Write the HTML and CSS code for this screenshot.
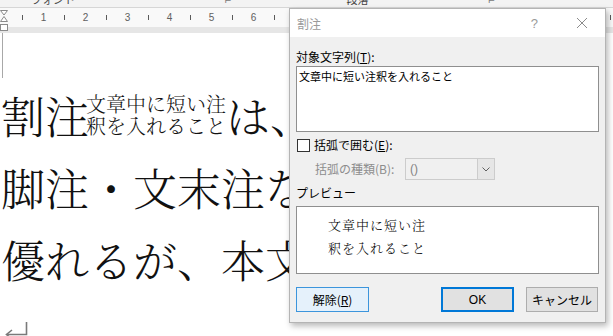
FILE: index.html
```html
<!DOCTYPE html>
<html lang="ja">
<head>
<meta charset="utf-8">
<link rel="stylesheet" href="styles.css">
</head>
<body>
<div class="page">
  <div class="ribbon">
    <span class="rb rb-font">フォント</span>
    <span class="rb rb-l1">⌐</span>
    <span class="rb rb-para">段落</span>
    <span class="rb rb-l2">⌐</span>
  </div>
  <div class="ruler">
    <span class="t"></span><span class="n">1</span><span class="t"></span><span class="n">2</span><span class="t"></span><span class="n">3</span><span class="t"></span><span class="n">4</span><span class="t"></span><span class="n">5</span><span class="t"></span><span class="n">6</span><span class="t"></span><span class="n">7</span><span class="t"></span><span class="n">8</span><span class="t"></span><span class="n">9</span><span class="t"></span><span class="n">10</span><span class="t"></span><span class="n">11</span><span class="t"></span><span class="n">12</span><span class="t"></span><span class="n">13</span><span class="t"></span><span class="n">14</span><span class="t"></span>
    <svg class="indent" width="9" height="23" viewBox="0 0 9 23">
      <path d="M0.5 0.5 H7.5 L4 5 Z" fill="#fff" stroke="#8a8a8a"/>
      <path d="M4 6.5 L7.5 11.5 H0.5 Z" fill="#fff" stroke="#8a8a8a"/>
      <rect x="0.5" y="14.5" width="7" height="6" fill="#fff" stroke="#8a8a8a"/>
    </svg>
  </div>
  <div class="ruler-band"></div>
  <div class="doc">
    <div class="corner"></div>
    <div class="line">
      <span class="big">割注</span><span class="wari"><span>文章中に短い注</span><span>釈を入れること</span></span><span class="big">は、本文の途中に</span>
    </div>
    <div class="line"><span class="big">脚注・文末注などと比べて</span></div>
    <div class="line"><span class="big">優れるが、本文の流れを</span></div>
    <svg class="ret" width="23" height="14" viewBox="0 0 23 14">
      <path d="M21.5 0 V12.5 H2" fill="none" stroke="#7a7a7a" stroke-width="1.6"/>
      <path d="M7 8 L1.5 12.5 L7 17" fill="none" stroke="#7a7a7a" stroke-width="1.6"/>
    </svg>
  </div>

  <div class="dialog">
    <div class="titlebar">
      <span class="title">割注</span>
      <span class="help">?</span>
      <svg class="close" width="12" height="12" viewBox="0 0 12 12">
        <path d="M1 1 L11 11 M11 1 L1 11" stroke="#8c8c8c" stroke-width="1"/>
      </svg>
    </div>
    <div class="body">
      <div class="label">対象文字列(<u>T</u>):</div>
      <div class="textbox">文章中に短い注釈を入れること</div>
      <div class="checkrow">
        <span class="checkbox"></span>
        <span class="label">括弧で囲む(<u>E</u>):</span>
      </div>
      <div class="selectrow">
        <span class="label dim">括弧の種類(B):</span>
        <div class="select">
          <span class="sel-val">()</span>
          <span class="sel-btn">
            <svg width="8" height="5" viewBox="0 0 8 5"><path d="M0.5 0.5 L4 4 L7.5 0.5" fill="none" stroke="#606060"/></svg>
          </span>
        </div>
      </div>
      <div class="label preview-label">プレビュー</div>
      <div class="preview">
        <div>文章中に短い注</div>
        <div>釈を入れること</div>
      </div>
      <div class="buttons">
        <span class="btn btn-clear">解除(<u>R</u>)</span>
        <span class="spacer"></span>
        <span class="btn btn-ok">OK</span>
        <span class="btn btn-cancel">キャンセル</span>
      </div>
    </div>
  </div>
</div>
</body>
</html>
```

FILE: styles.css
```css
* { box-sizing: border-box; }
html, body { margin: 0; padding: 0; background: #fff; }
.page {
  position: relative;
  width: 613px;
  height: 336px;
  overflow: hidden;
  font-family: "Noto Sans CJK JP", sans-serif;
}

/* ribbon strip (mostly cut off) */
.ribbon {
  height: 8px;
  background: #f3f3f3;
  border-bottom: 1px solid #d6d6d6;
  overflow: hidden;
  display: flex;
  font-size: 11px;
  line-height: 12px;
  color: #444;
}
.rb { margin-top: -7px; white-space: nowrap; }
.rb-font { margin-left: 31px; }
.rb-l1 { margin-left: 150px; color: #777; }
.rb-para { margin-left: 115px; }
.rb-l2 { margin-left: 120px; color: #777; }

/* ruler */
.ruler {
  position: relative;
  height: 19px;
  background: #f9f9f9;
  display: flex;
  align-items: center;
  padding-left: 12px;
  white-space: nowrap;
}
.ruler .t, .ruler .n {
  flex: 0 0 21px;
  display: flex;
  justify-content: center;
  align-items: center;
  height: 19px;
}
.ruler .t::before {
  content: "";
  width: 1px;
  height: 5px;
  background: #5a5a5a;
}
.ruler .n {
  font-family: "Liberation Sans", sans-serif;
  font-size: 10px;
  color: #606060;
}
.indent { position: absolute; left: 0; top: 2px; }
.ruler-band { height: 6px; background: #e6e6e6; }

/* document */
.doc { padding-left: 1px; }
.corner {
  width: 1px;
  height: 45px;
  margin-left: 1px;
  margin-bottom: 1px;
  background: #a8a8a8;
}
.line {
  height: 72px;
  display: flex;
  align-items: center;
  white-space: nowrap;
  font-family: "Noto Serif CJK JP", "Noto Sans CJK JP", serif;
  font-weight: 300;
  color: #111;
}
.big { font-size: 44px; line-height: 44px; }
.wari {
  display: inline-flex;
  flex-direction: column;
  font-size: 20px;
  line-height: 22px;
  margin-left: -3px;
}
.ret { display: block; margin-top: 27px; margin-left: 4px; }

/* dialog */
.dialog {
  position: absolute;
  left: 289px;
  top: 8px;
  width: 317px;
  height: 315px;
  background: #f0f0f0;
  border: 1px solid #b4b4b4;
  box-shadow: 2px 3px 6px rgba(0, 0, 0, 0.28);
  font-size: 12px;
  color: #000;
}
.titlebar {
  height: 28px;
  background: #fff;
  display: flex;
  align-items: center;
  padding-left: 7px;
}
.title { color: #9a9a9a; font-size: 12px; flex: 1; }
.help { color: #9a9a9a; font-size: 13px; margin-right: 38px; font-family: "Liberation Sans", sans-serif; }
.close { margin-right: 17px; }

.body { padding: 0 6px; }
.label { line-height: 18px; white-space: nowrap; }
.body > .label:first-child { margin-top: 11px; }
.textbox {
  margin-top: 0;
  height: 66px;
  background: #fff;
  border: 1px solid #8f8f8f;
  padding: 1px 2px;
  font-size: 11px;
  line-height: 16px;
}
.checkrow {
  margin-top: 5px;
  height: 16px;
  display: flex;
  align-items: center;
  gap: 4px;
  padding-left: 1px;
}
.checkbox {
  width: 13px;
  height: 13px;
  background: #fff;
  border: 1px solid #333;
}
.selectrow {
  margin-top: 5px;
  display: flex;
  align-items: center;
  padding-left: 19px;
}
.selectrow .label { width: 90px; }
.dim { color: #8d8d8d; }
.select {
  width: 90px;
  height: 22px;
  border: 1px solid #cccccc;
  background: #f0f0f0;
  display: flex;
  align-items: center;
}
.sel-val { flex: 1; color: #838383; padding-left: 4px; font-family: "Liberation Sans", sans-serif; }
.sel-btn {
  width: 17px;
  height: 20px;
  background: #e6e6e6;
  border-left: 1px solid #cccccc;
  display: flex;
  align-items: center;
  justify-content: center;
}
.preview-label { margin-top: 4px; }
.preview {
  margin-top: 4px;
  height: 68px;
  background: #fff;
  border: 1px solid #8f8f8f;
  padding: 6px 0 0 31px;
  font-size: 13px;
  line-height: 23px;
  letter-spacing: 1px;
  font-family: "Noto Serif CJK JP", "Noto Sans CJK JP", serif;
  font-weight: 300;
}
.buttons {
  margin-top: 13px;
  display: flex;
  height: 25px;
}
.spacer { flex: 1; }
.btn {
  width: 73px;
  height: 25px;
  display: flex;
  align-items: center;
  justify-content: center;
  background: #e1e1e1;
  border: 1px solid #adadad;
}
.btn-clear { background: #e5f1fb; border-color: #3c95dc; }
.btn-ok { border: 2px solid #0078d7; margin-right: 12px; font-family: "Liberation Sans", "Noto Sans CJK JP", sans-serif; }
.btn-cancel { width: 72px; margin-right: 1px; }
u { text-decoration: underline; text-underline-offset: 1px; }
```
